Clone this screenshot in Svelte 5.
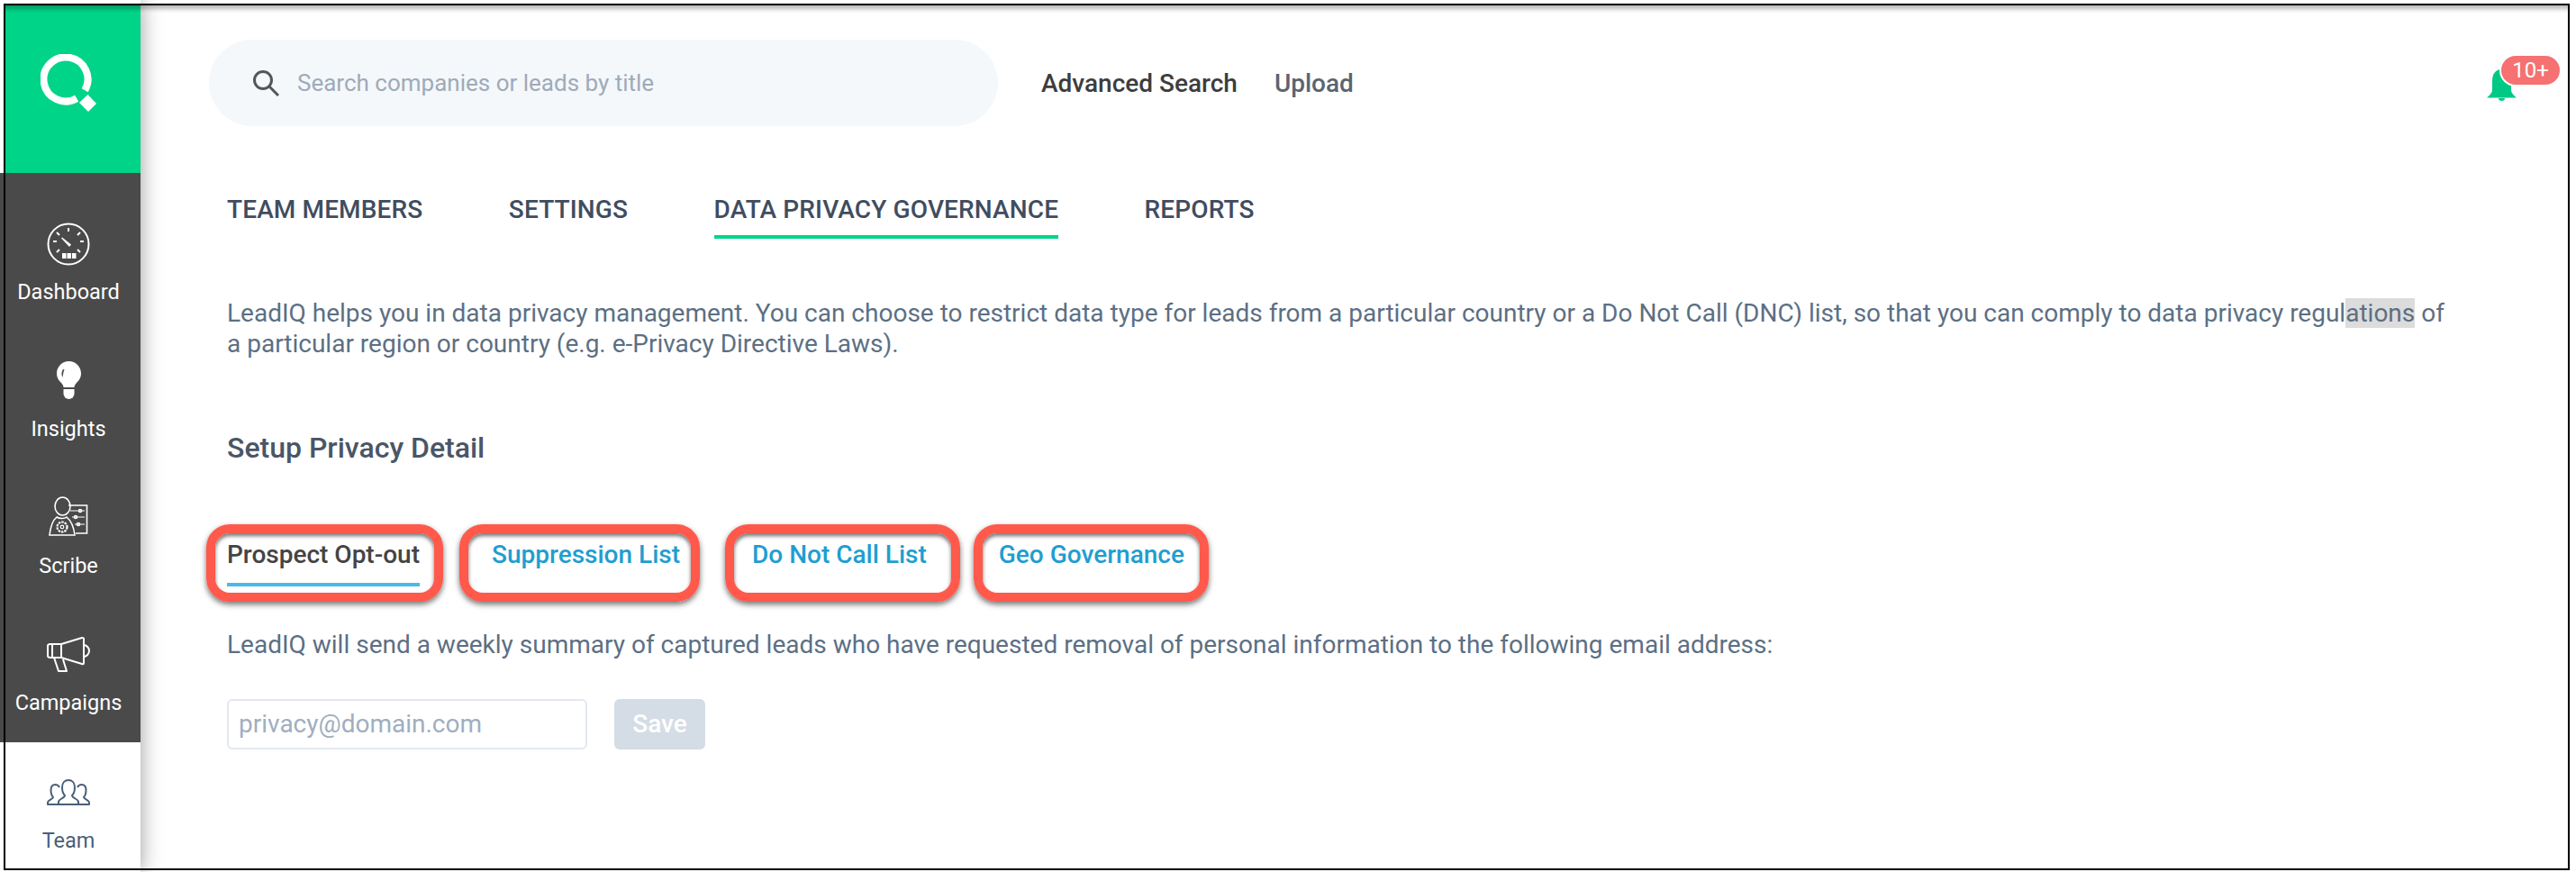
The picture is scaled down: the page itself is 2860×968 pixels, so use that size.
<script lang="ts">
  // LeadIQ team settings, data privacy tab
  const topTabs = [
    { label: 'TEAM MEMBERS' },
    { label: 'SETTINGS' },
    { label: 'DATA PRIVACY GOVERNANCE', active: true },
    { label: 'REPORTS' },
  ];

  const subTabs = [
    { label: 'Prospect Opt-out', mod: 'first', active: true },
    { label: 'Suppression List', mod: 'second' },
    { label: 'Do Not Call List', mod: 'third' },
    { label: 'Geo Governance', mod: 'fourth' },
  ];
</script>

<div class="page">
  <aside class="sidebar">
    <div class="logo">
      <svg width="62" height="64" viewBox="45 60 62 64" aria-hidden="true">
        <path d="M94.2 100.2A24.5 24.5 0 1 0 85.2 109.2" fill="none" stroke="#fff" stroke-width="8" />
        <path d="M97.5 105 107 115 98 124 88 114Z" fill="#fff" />
      </svg>
    </div>

    <nav class="dark">
      <div class="item">
        <svg width="48" height="48" viewBox="0 0 48 48" fill="none" stroke="#fff" aria-hidden="true">
          <circle cx="24" cy="24" r="22.5" stroke-width="2" />
          <path d="M24 6v4M11 11l3 3M37 11l-3 3M7 21h4M37 21h4M11 33l3-3M37 33l-3-3" stroke-width="2" />
          <path d="M16 17.500 17 16.500 27 24.500 25 27Z" fill="#fff" stroke="none" />
          <path d="M17 34h4.500v6H17zM22.500 34h4.500v6h-4.500zM28 34h4.500v6H28z" fill="#fff" stroke="none" />
        </svg>
        <span>Dashboard</span>
      </div>

      <div class="item">
        <svg width="48" height="48" viewBox="0 0 48 48" aria-hidden="true">
          <path d="M24.500 2C17 2 11 8 11 15.500c0 5 2.500 8 5 10.500 1.500 2 2.500 3 2.500 5h12c0-2 1-3 2.500-5 2.500-2.500 5-5.500 5-10.500C38 8 32 2 24.500 2Z" fill="#fff" />
          <path d="M18.500 33h12v5a6 6 0 0 1-12 0z" fill="#fff" />
          <path d="M18 11c-2 3-2 6-0.500 9 0.500-3 0.800-6 2-9Z" fill="#4a4a4a" />
        </svg>
        <span>Insights</span>
      </div>

      <div class="item">
        <svg width="48" height="48" viewBox="0 0 48 48" fill="none" stroke="#fff" stroke-width="1.600" aria-hidden="true">
          <path d="M24 10h20.500v31H32" />
          <ellipse cx="17.500" cy="11" rx="8.500" ry="10" />
          <path d="M11 23C6 27 4 34 3 43h28c-1-8-4-16-9-20-2 2-8 2-11 0Z" />
          <circle cx="17" cy="34" r="5.500" stroke-dasharray="2.500 1" stroke-width="2.200" />
          <circle cx="17" cy="34" r="1.800" stroke-width="1.200" />
          <path d="M26 16h16M28 23h14M31 31h11" stroke-width="1.200" />
          <circle cx="37" cy="16" r="1.500" /><circle cx="32" cy="23" r="1.500" /><circle cx="35" cy="31" r="1.500" />
        </svg>
        <span>Scribe</span>
      </div>

      <div class="item">
        <svg width="48" height="42" viewBox="0 0 48 42" fill="none" stroke="#fff" stroke-width="2" stroke-linejoin="round" aria-hidden="true">
          <path d="M4 9h12l23-7c1 0 2 0 2 1v27c0 1-1 1.500-2 1l-23-7H4c-2 0-3-1-3-2V11c0-1 1-2 3-2Z" />
          <path d="M16 9v15M6 9v15" />
          <path d="M41 10c3 0 6 3 6 6.500s-3 6.500-6 6.500" />
          <path d="M8 24l5 15h9l-4-13" />
        </svg>
        <span>Campaigns</span>
      </div>
    </nav>

    <div class="item team">
      <svg width="48" height="30" viewBox="0 0 48 30" fill="none" stroke="#4a5f78" stroke-width="2" stroke-linejoin="round" aria-hidden="true">
        <path d="M13 28H1v-2c0-3 6-4 6-6-2-2-2.500-5-2.500-8 0-4 2-6 5-6 2 0 3.500 1 4.500 3" />
        <path d="M35 28h12v-2c0-3-6-4-6-6 2-2 2.500-5 2.500-8 0-4-2-6-5-6-2 0-3.500 1-4.500 3" />
        <path d="M13 28v-3c0-3 7-4 7-7-2-2-3-6-3-9 0-5 3-8 7-8s7 3 7 8c0 3-1 7-3 9 0 3 7 4 7 7v3Z" />
      </svg>
      <span>Team</span>
    </div>
  </aside>

  <main class="main">
    <header class="header">
      <div class="search">
        <svg width="30" height="30" viewBox="0 0 30 30" fill="none" stroke="#555" stroke-width="3" aria-hidden="true">
          <circle cx="12" cy="12" r="9.500" />
          <path d="M19 19l10 10" />
        </svg>
        <span>Search companies or leads by title</span>
      </div>
      <a class="link strong" href="#top">Advanced Search</a>
      <a class="link" href="#top">Upload</a>
      <div class="bell">
        <svg width="33" height="35" viewBox="0 0 33 35" aria-hidden="true">
          <path d="M16.500 0C9 0 6 6 6 13v10c0 3-3 6-6 8.500h33C30 29 27 26 27 23V13C27 6 24 0 16.500 0Z" fill="#00c985" />
          <path d="M13 32h7c0 2-1.500 3-3.500 3S13 34 13 32Z" fill="#00c985" />
        </svg>
        <span class="badge">10+</span>
      </div>
    </header>

    <div class="tabs">
      {#each topTabs as tab}
        <span class="tab" class:active={tab.active}>{tab.label}</span>
      {/each}
    </div>

    <p class="intro">LeadIQ helps you in data privacy management. You can choose to restrict data type for leads from a particular country or a Do Not Call (DNC) list, so that you can comply to data privacy regul<span class="selected">ations</span> of<br />a particular region or country (e.g. e-Privacy Directive Laws).</p>

    <h2 class="title">Setup Privacy Detail</h2>

    <div class="subtabs">
      {#each subTabs as tab}
        <span class="subtab {tab.mod}" class:active={tab.active}>{tab.label}</span>
      {/each}
    </div>

    <p class="note">LeadIQ will send a weekly summary of captured leads who have requested removal of personal information to the following email address:</p>

    <div class="form">
      <div class="input">privacy@domain.com</div>
      <div class="save">Save</div>
    </div>
  </main>

  <div class="frame"></div>
</div>

<style>
  :global(body) {
    margin: 0;
    background: #fff;
  }

  .page {
    position: relative;
    display: flex;
    width: 2860px;
    height: 968px;
    overflow: hidden;
    font-family: Roboto, "Liberation Sans", sans-serif;
    color: #5c6f84;
  }

  /* ---- Sidebar ---- */
  .sidebar {
    flex: none;
    display: flex;
    flex-direction: column;
    width: 156px;
    height: 968px;
    background: #fff;
    box-shadow: 0 0 22px rgba(0, 0, 0, 0.4);
    z-index: 2;
  }

  .logo {
    flex: none;
    box-sizing: border-box;
    height: 192px;
    padding: 56px 0 0 41px;
    border-top: 4px solid #fff;
    border-left: 4px solid #fff;
    background: #00d488;
  }

  .dark {
    flex: none;
    box-sizing: border-box;
    height: 632px;
    padding-top: 55px;
    background: #4a4a4a;
  }

  .item {
    flex: none;
    box-sizing: border-box;
    display: flex;
    flex-direction: column;
    align-items: center;
    height: 152px;
    padding-right: 4px;
    color: #fff;
    font-size: 23.5px;
    line-height: 30px;
  }

  .item svg {
    display: block;
    flex: none;
    height: 48px;
    margin-bottom: 14px;
  }

  .team {
    height: 144px;
    padding-top: 32px;
    color: #4a5f78;
  }

  /* ---- Main ---- */
  .main {
    flex: 1;
    min-width: 0;
  }

  .header {
    position: relative;
    display: flex;
    align-items: center;
    height: 96px;
    margin-top: 44px;
    padding-left: 76px;
    font-size: 28px;
  }

  .search {
    box-sizing: border-box;
    display: flex;
    align-items: center;
    gap: 20px;
    width: 876px;
    height: 96px;
    padding-left: 48px;
    border-radius: 48px;
    background: #f4f8fb;
    color: #a0aab8;
    font-size: 26px;
  }

  .link {
    margin-left: 41px;
    color: #5b6470;
    font-weight: 500;
    text-decoration: none;
  }

  .strong {
    margin-left: 48px;
    color: #3d3d3d;
  }

  .bell {
    position: absolute;
    left: 2605px;
    top: 33px;
  }

  .bell svg {
    display: block;
  }

  .badge {
    position: absolute;
    left: 14px;
    top: -17px;
    width: 65px;
    height: 32px;
    border: 2px solid #fff;
    border-radius: 18px;
    background: #f67171;
    color: #fff;
    font-size: 24px;
    line-height: 32px;
    text-align: center;
  }

  .tabs {
    display: flex;
    gap: 95.500px;
    margin: 74px 0 0 96px;
  }

  .tab {
    box-sizing: border-box;
    height: 51px;
    color: #3f4d5f;
    font-size: 28px;
    font-weight: 500;
    letter-spacing: 0.13px;
    line-height: 38px;
  }

  .tab.active {
    border-bottom: 4px solid #00d488;
  }

  .intro {
    margin: 66px 0 0 96px;
    font-size: 28px;
    line-height: 34px;
  }

  .selected {
    background: #dcdcdc;
  }

  .title {
    margin: 78px 0 0 96px;
    color: #4a5666;
    font-size: 32px;
    font-weight: 500;
    line-height: 40px;
  }

  .subtabs {
    display: flex;
    gap: 80px;
    height: 58px;
    margin: 79px 0 0 96px;
  }

  .subtab {
    position: relative;
    box-sizing: border-box;
    height: 55px;
    color: #1f9ed1;
    font-size: 28px;
    font-weight: 500;
    line-height: 40px;
  }

  .subtab.active {
    color: #444;
    border-bottom: 4px solid #4db8e8;
  }

  /* red callouts drawn over the tabs */
  .subtab::after {
    content: '';
    position: absolute;
    top: -14px;
    height: 66px;
    border: 10px solid #ff594c;
    border-radius: 26px;
    box-shadow: 0 3px 6px rgba(0, 0, 0, 0.55), inset 0 3px 4px rgba(0, 0, 0, 0.55);
  }

  .first::after { left: -23px; right: -26px; }
  .second::after { left: -36px; right: -22px; }
  .third::after { left: -30px; right: -37px; }
  .fourth::after { left: -28px; right: -27px; }

  .note {
    margin: 44px 0 0 96px;
    font-size: 28px;
    line-height: 36px;
  }

  .form {
    display: flex;
    gap: 30px;
    margin: 42px 0 0 96px;
  }

  .input {
    box-sizing: border-box;
    width: 400px;
    height: 56px;
    padding-left: 11px;
    border: 2px solid #e2e8f0;
    border-radius: 6px;
    color: #a0aec0;
    font-size: 28px;
    line-height: 52px;
  }

  .save {
    width: 101px;
    height: 56px;
    border-radius: 6px;
    background: #d4dce6;
    color: #fff;
    font-size: 28px;
    font-weight: 500;
    line-height: 56px;
    text-align: center;
  }

  /* screenshot border */
  .frame {
    position: absolute;
    left: 4px;
    top: 4px;
    width: 2845px;
    height: 958px;
    border: 2.500px solid #000;
    box-shadow: inset 0 7px 5px -3px rgba(0, 0, 0, 0.28);
    pointer-events: none;
    z-index: 3;
  }
</style>
